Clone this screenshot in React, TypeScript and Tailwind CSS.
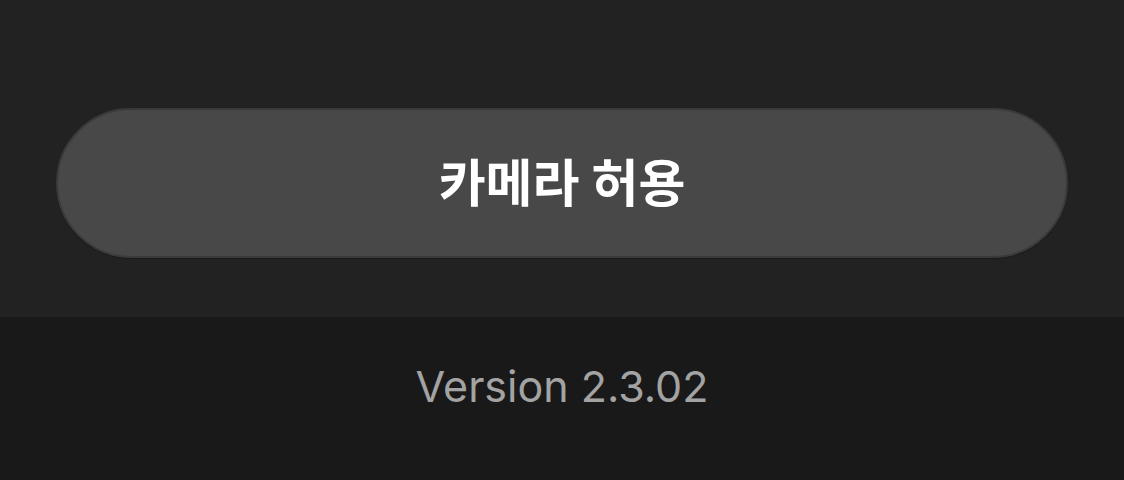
export default function App() {
  return (
    <div className="w-[1124px] h-[480px] flex flex-col" style={{ fontFamily: 'Inter, "Noto Sans CJK KR", sans-serif' }}>
      <div className="h-[317px] bg-[#222222] flex items-start px-[56px] pt-[108px]">
        <button className="w-full h-[150px] rounded-full bg-[#484848] border-2 border-[#3a3a3a] shadow-[0_1px_1px_rgba(0,0,0,0.3)] flex items-center justify-center text-white font-bold text-[51px] leading-none">
          카메라 허용
        </button>
      </div>
      <div className="flex-1 bg-[#191919] flex justify-center pt-[48px]">
        <span className="text-[#a3a3a3] text-[43px] leading-none">Version 2.3.02</span>
      </div>
    </div>
  );
}
